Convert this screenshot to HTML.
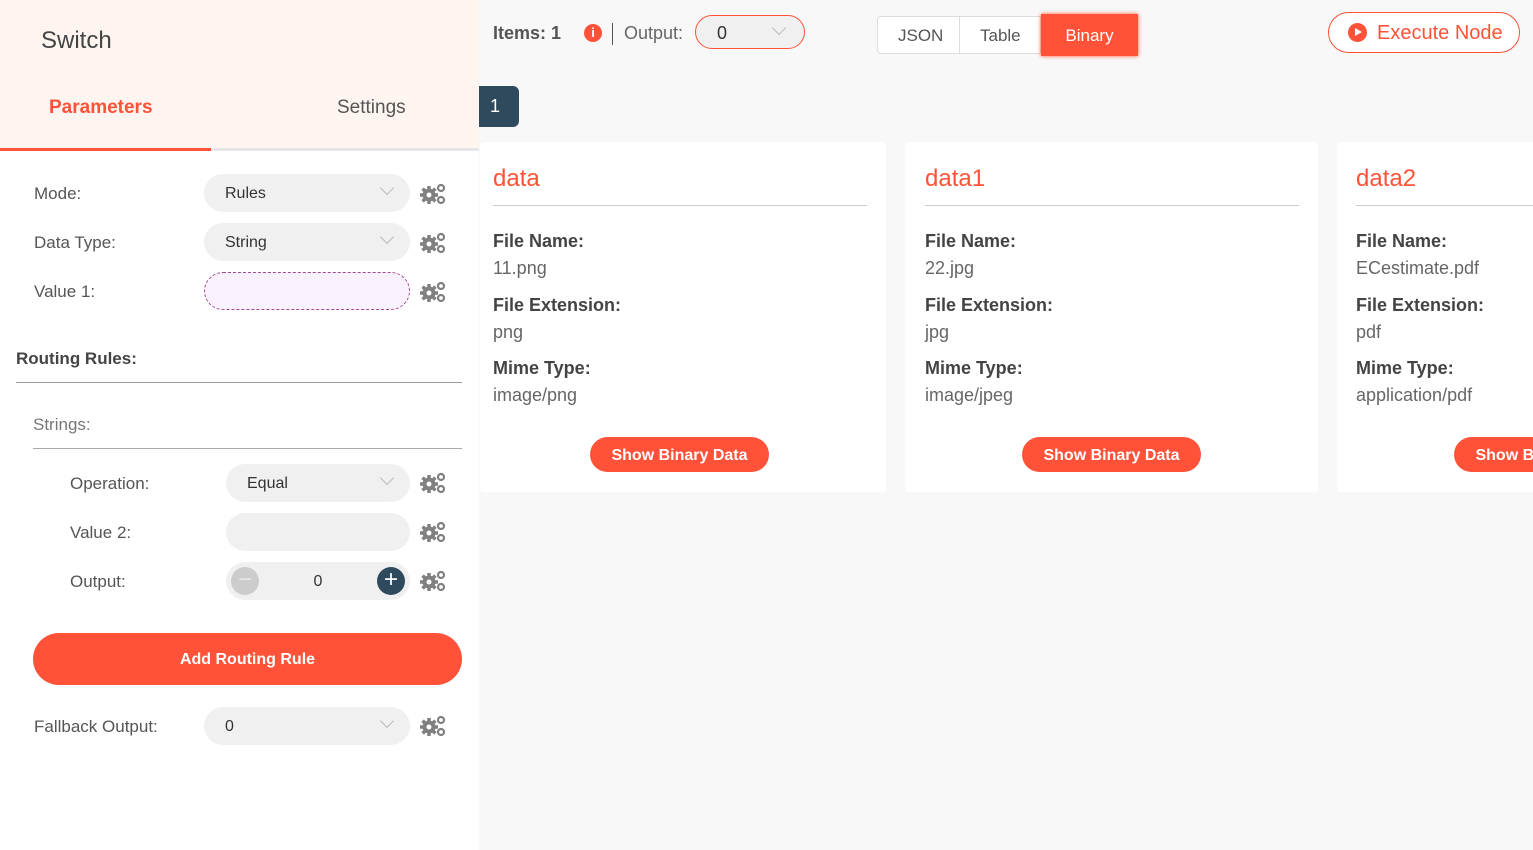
<!DOCTYPE html>
<html><head><meta charset="utf-8"><style>
*{box-sizing:border-box;margin:0;padding:0}
html,body{width:1533px;height:850px;overflow:hidden}
body{background:#f8f8f8;font-family:"Liberation Sans","DejaVu Sans",sans-serif;color:#555;position:relative}
#wrap{position:absolute;left:0;top:0;width:1533px;height:850px;overflow:hidden}
.left{position:absolute;left:0;top:0;width:479px;height:850px;background:#fff}
.hdr{position:absolute;left:0;top:0;width:479px;height:148px;background:#fef5f1}
.abs{position:absolute}
.lbl{position:absolute;font-size:17px;color:#555}
.inp{position:absolute;height:38px;border-radius:19px;background:#f0f0f0;font-size:16px;color:#333;padding-left:21px;line-height:40px}
.chev{position:absolute;right:18px;top:9px;width:10px;height:10px;border-right:1px solid #bbb;border-bottom:1px solid #bbb;transform:rotate(45deg)}
.gear{position:absolute;width:26px;height:22px}
.card{position:absolute;top:142px;height:350px;background:#fff;border-radius:4px}
.card h2{position:absolute;left:13px;top:23px;font-size:24px;font-weight:normal;color:#ff5238}
.card .ln{position:absolute;left:13px;top:63px;height:1px;background:#ccc}
.card .k{position:absolute;left:13px;font-size:18px;font-weight:bold;color:#444}
.card .v{position:absolute;left:13px;font-size:18px;color:#666}
.btn{position:absolute;top:295px;height:35px;border-radius:18px;background:#ff5238;color:#fff;font-size:16px;font-weight:bold;line-height:37px;text-align:center;width:179px}
</style></head><body><div id="wrap">
<svg width="0" height="0" style="position:absolute"><defs>
<g id="g"><g fill="#808080"><circle cx="9" cy="12" r="6.5"/><g stroke="#808080" stroke-width="3.5"><line x1="9" y1="3" x2="9" y2="21"/><line x1="0" y1="12" x2="18" y2="12"/><line x1="2.6" y1="5.6" x2="15.4" y2="18.4"/><line x1="2.6" y1="18.4" x2="15.4" y2="5.6"/></g></g><circle cx="9" cy="12" r="2.5" fill="#fff"/>
<circle cx="21" cy="5" r="3" fill="none" stroke="#808080" stroke-width="2.2"/><circle cx="21" cy="17" r="3" fill="none" stroke="#808080" stroke-width="2.2"/></g></defs></svg>
<div class="left">
<div class="hdr"></div>
<div class="abs" style="left:41px;top:27px;font-size:24px;color:#444">Switch</div>
<div class="abs" style="left:49px;top:97px;font-size:19px;font-weight:bold;color:#ff5238">Parameters</div>
<div class="abs" style="left:337px;top:97px;font-size:19px;color:#555">Settings</div>
<div class="abs" style="left:0;top:148px;width:479px;height:3px;background:#e4e6ea"></div>
<div class="abs" style="left:0;top:148px;width:211px;height:3px;background:#ff5238"></div>

<div class="lbl" style="left:34px;top:184px">Mode:</div>
<div class="inp" style="left:204px;top:174px;width:206px">Rules<span class="chev"></span></div>
<svg class="gear" style="left:420px;top:183px"><use href="#g"/></svg>
<div class="lbl" style="left:34px;top:233px">Data Type:</div>
<div class="inp" style="left:204px;top:223px;width:206px">String<span class="chev"></span></div>
<svg class="gear" style="left:420px;top:232px"><use href="#g"/></svg>
<div class="lbl" style="left:34px;top:282px">Value 1:</div>
<div class="inp" style="left:204px;top:272px;width:206px;background:#f9f1fd;border:1px dashed #a04c8e"></div>
<svg class="gear" style="left:420px;top:281px"><use href="#g"/></svg>

<div class="lbl" style="left:16px;top:349px;font-weight:bold;color:#444">Routing Rules:</div>
<div class="abs" style="left:16px;top:382px;width:446px;height:1px;background:#999"></div>
<div class="lbl" style="left:33px;top:415px;color:#777">Strings:</div>
<div class="abs" style="left:33px;top:448px;width:429px;height:1px;background:#aaa"></div>

<div class="lbl" style="left:70px;top:474px">Operation:</div>
<div class="inp" style="left:226px;top:464px;width:184px">Equal<span class="chev"></span></div>
<svg class="gear" style="left:420px;top:472px"><use href="#g"/></svg>
<div class="lbl" style="left:70px;top:523px">Value 2:</div>
<div class="inp" style="left:226px;top:513px;width:184px"></div>
<svg class="gear" style="left:420px;top:521px"><use href="#g"/></svg>
<div class="lbl" style="left:70px;top:572px">Output:</div>
<div class="inp" style="left:226px;top:562px;width:184px;padding:0;text-align:center">0</div>
<div class="abs" style="left:231px;top:567px;width:28px;height:28px;border-radius:50%;background:#ccc;color:#e6e6e6;font-size:24px;line-height:26px;text-align:center">−</div>
<div class="abs" style="left:377px;top:567px;width:28px;height:28px;border-radius:50%;background:#2f4a5c;color:#fff;font-size:24px;line-height:26px;text-align:center">+</div>
<svg class="gear" style="left:420px;top:570px"><use href="#g"/></svg>

<div class="abs" style="left:33px;top:633px;width:429px;height:52px;border-radius:26px;background:#ff5238;color:#fff;font-size:16px;font-weight:bold;text-align:center;line-height:54px">Add Routing Rule</div>

<div class="lbl" style="left:34px;top:717px">Fallback Output:</div>
<div class="inp" style="left:204px;top:707px;width:206px">0<span class="chev"></span></div>
<svg class="gear" style="left:420px;top:715px"><use href="#g"/></svg>
</div>

<div class="abs" style="left:493px;top:23px;font-size:18px;font-weight:bold;color:#555">Items: 1</div>
<div class="abs" style="left:584px;top:24px;width:18px;height:18px;border-radius:50%;background:#ff5238;color:#fff;font-size:13px;font-weight:bold;text-align:center;line-height:18px">i</div>
<div class="abs" style="left:612px;top:23px;width:1px;height:22px;background:#555"></div>
<div class="abs" style="left:624px;top:23px;font-size:18px;color:#666">Output:</div>
<div class="abs" style="left:695px;top:15px;width:110px;height:34px;border:1px solid #ff5238;border-radius:17px;background:#f0f0f0;font-size:18px;color:#333;padding-left:21px;line-height:34px">0<span class="chev" style="top:7px;right:20px"></span></div>

<div class="abs" style="left:877px;top:16px;width:164px;height:38px;border:1px solid #ddd;border-radius:4px 0 0 4px;background:#fff"></div>
<div class="abs" style="left:959px;top:16px;width:1px;height:38px;background:#ddd"></div>
<div class="abs" style="left:898px;top:26px;font-size:17px;color:#555">JSON</div>
<div class="abs" style="left:980px;top:26px;font-size:17px;color:#555">Table</div>
<div class="abs" style="left:1041px;top:14px;width:97px;height:42px;background:#ff5238;box-shadow:0 0 4px #ff5238;color:#fff;font-size:17px;text-align:center;line-height:43px">Binary</div>

<div class="abs" style="left:1328px;top:12px;width:192px;height:41px;border:1px solid #ff5238;border-radius:21px;background:#fff"></div>
<div class="abs" style="left:1348px;top:23px;width:19px;height:19px;border-radius:50%;background:#ff5238"></div>
<div class="abs" style="left:1355px;top:28px;width:0;height:0;border-left:7px solid #fff;border-top:4.5px solid transparent;border-bottom:4.5px solid transparent"></div>
<div class="abs" style="left:1377px;top:22px;font-size:20px;color:#ff5238">Execute Node</div>

<div class="abs" style="left:479px;top:86px;width:40px;height:41px;background:#2f4a5c;border-radius:0 6px 6px 0;color:#fff;font-size:18px;line-height:41px;padding-left:11px">1</div>

<div class="card" style="left:480px;width:406px">
<h2>data</h2><div class="ln" style="width:374px"></div>
<div class="k" style="top:89px">File Name:</div><div class="v" style="top:116px">11.png</div>
<div class="k" style="top:153px">File Extension:</div><div class="v" style="top:180px">png</div>
<div class="k" style="top:216px">Mime Type:</div><div class="v" style="top:243px">image/png</div>
<div class="btn" style="left:110px">Show Binary Data</div>
</div>
<div class="card" style="left:905px;width:413px">
<h2 style="left:20px">data1</h2><div class="ln" style="left:20px;width:374px"></div>
<div class="k" style="left:20px;top:89px">File Name:</div><div class="v" style="left:20px;top:116px">22.jpg</div>
<div class="k" style="left:20px;top:153px">File Extension:</div><div class="v" style="left:20px;top:180px">jpg</div>
<div class="k" style="left:20px;top:216px">Mime Type:</div><div class="v" style="left:20px;top:243px">image/jpeg</div>
<div class="btn" style="left:117px">Show Binary Data</div>
</div>
<div class="card" style="left:1337px;width:196px;border-radius:4px 0 0 4px;overflow:hidden">
<h2 style="left:19px">data2</h2><div class="ln" style="left:19px;width:177px"></div>
<div class="k" style="left:19px;top:89px">File Name:</div><div class="v" style="left:19px;top:116px">ECestimate.pdf</div>
<div class="k" style="left:19px;top:153px">File Extension:</div><div class="v" style="left:19px;top:180px">pdf</div>
<div class="k" style="left:19px;top:216px">Mime Type:</div><div class="v" style="left:19px;top:243px">application/pdf</div>
<div class="btn" style="left:117px">Show Binary Data</div>
</div>
</div></body></html>
